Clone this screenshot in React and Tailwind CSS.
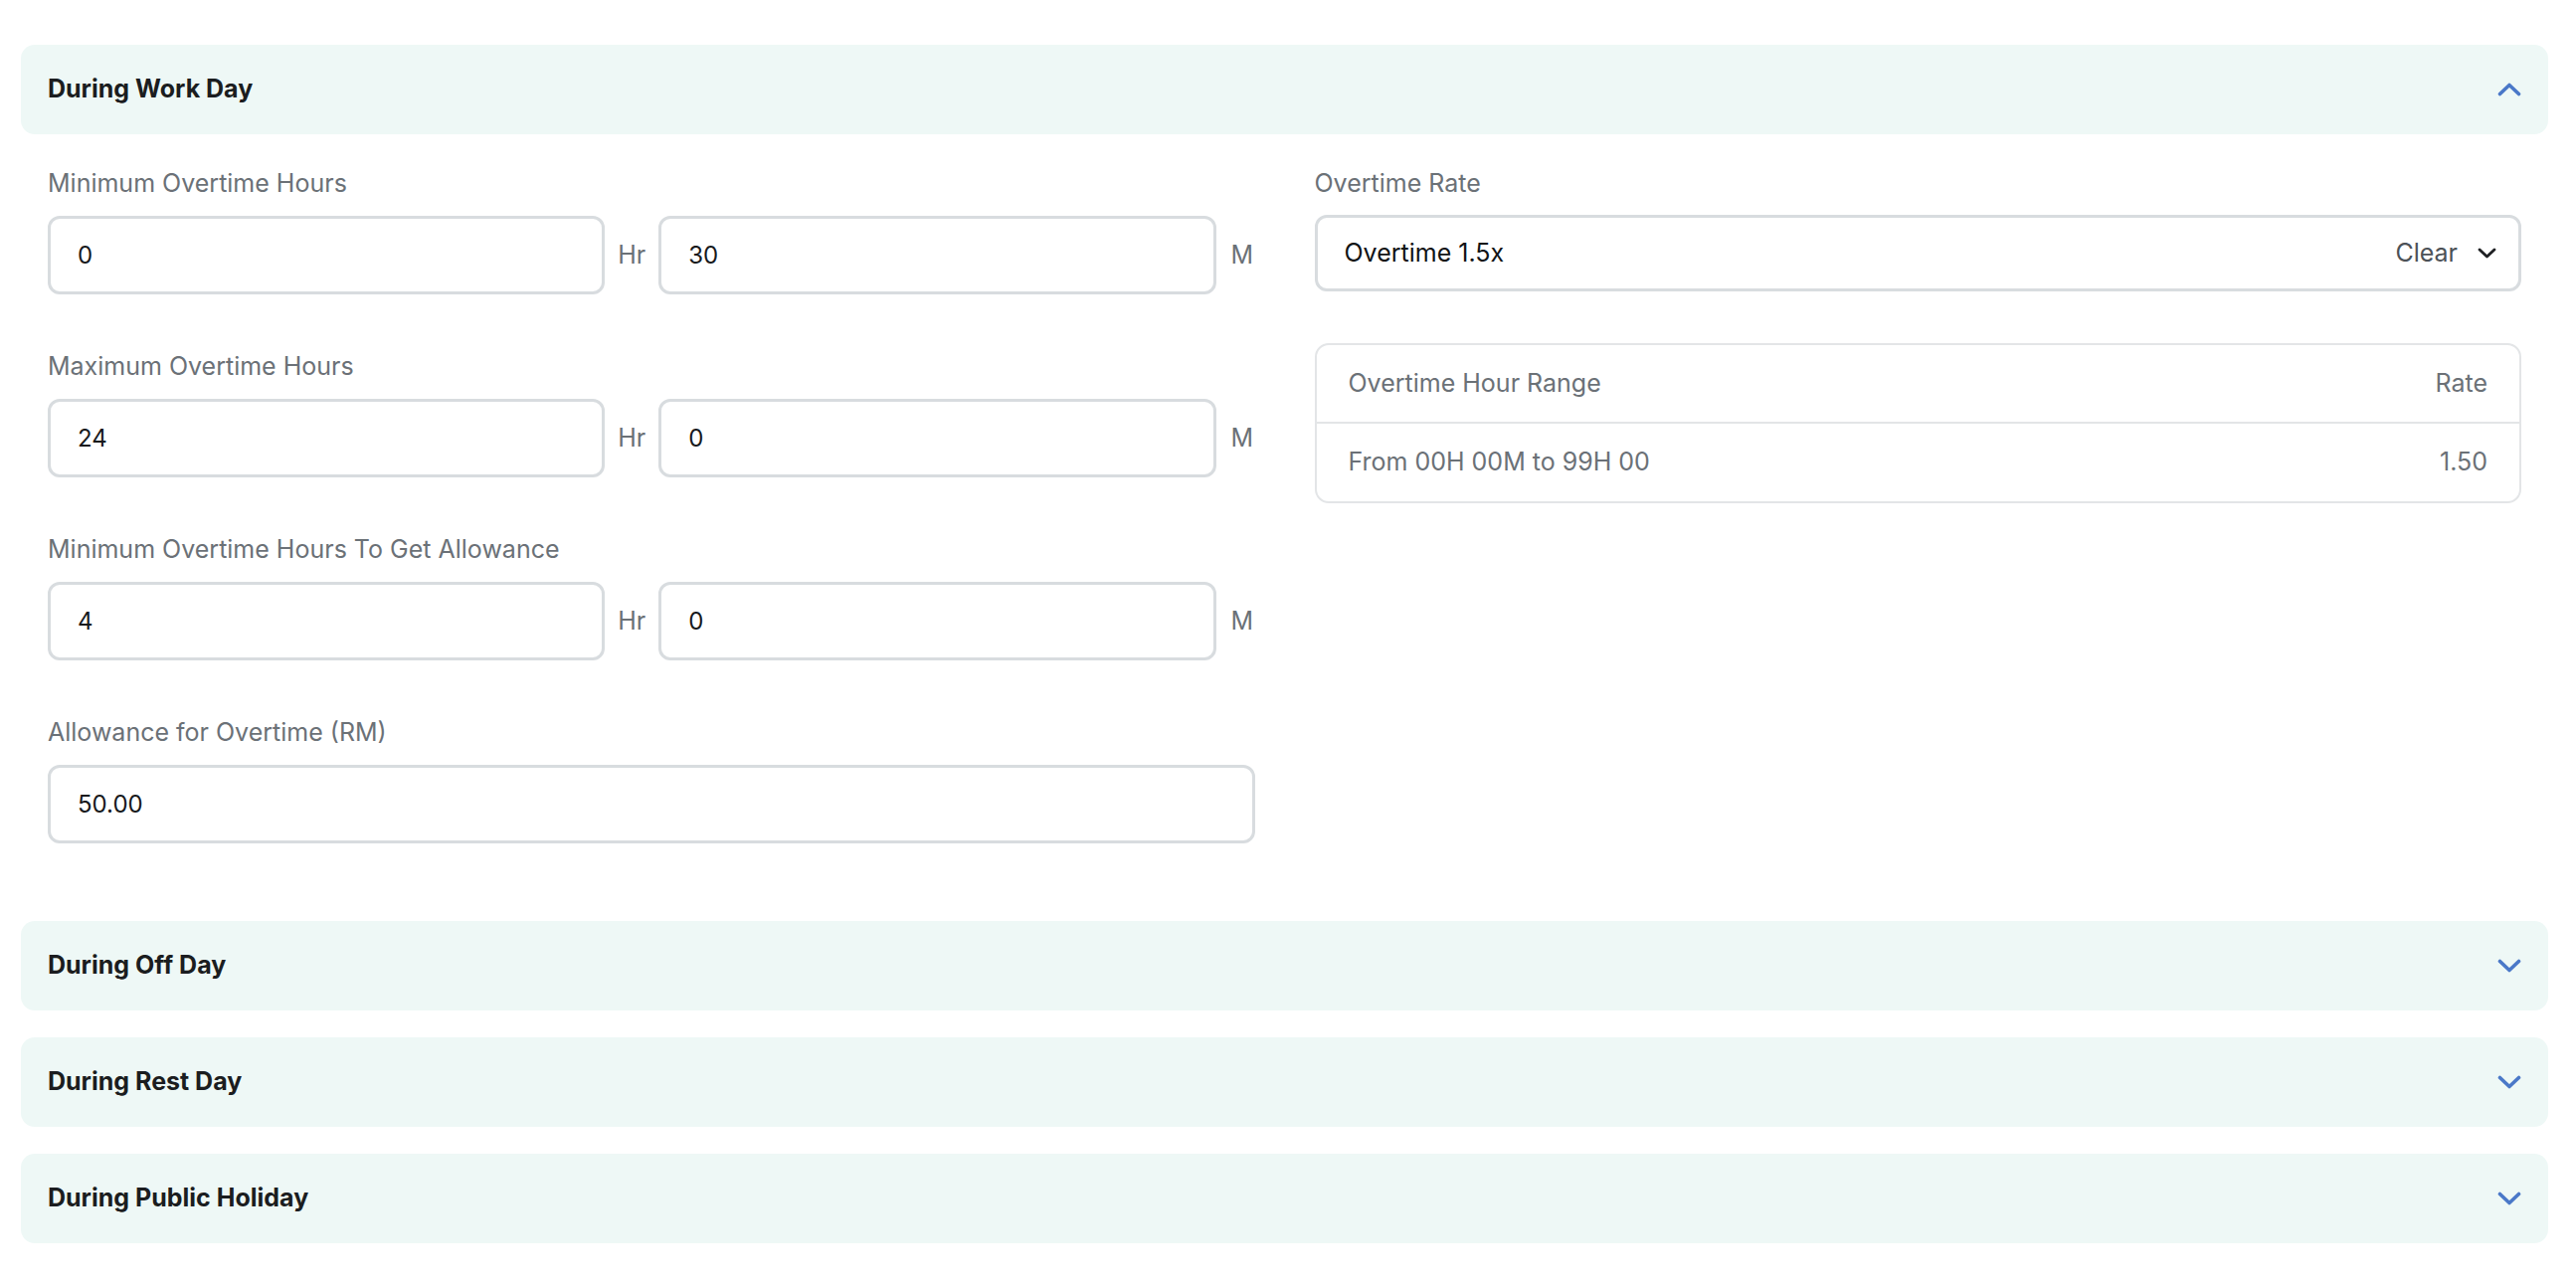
import React from "react";

const font = { fontFamily: "Inter, 'Noto Sans', sans-serif" };

const Chevron = ({ up = false, className = "" }) => (
  <svg
    viewBox="0 0 24 14"
    className={className}
    fill="none"
    stroke="currentColor"
    strokeWidth="3.6"
    strokeLinecap="round"
    strokeLinejoin="round"
  >
    {up ? <polyline points="2.5,11.5 12,2.5 21.5,11.5" /> : <polyline points="2.5,2.5 12,11.5 21.5,2.5" />}
  </svg>
);

const SectionHeader = ({ title, open }) => (
  <div className="flex h-[90px] items-center justify-between rounded-[14px] bg-[#eef8f6] px-[27px]">
    <span className="text-[25px] font-bold text-[#1b1d20]">{title}</span>
    <Chevron up={open} className="h-[14px] w-[24px] text-[#4a78c8]" />
  </div>
);

const Label = ({ children }) => (
  <div className="h-[32px] text-[25px] leading-[32px] text-[#6b7177]">{children}</div>
);

const TextBox = ({ value, className = "" }) => (
  <div
    className={`flex h-[79px] items-center rounded-[12px] border-[3px] border-[#d8dcdf] bg-white px-[27px] text-[24px] text-[#17191c] ${className}`}
  >
    {value}
  </div>
);

const HourMinute = ({ label, hours, minutes }) => (
  <div>
    <Label>{label}</Label>
    <div className="mt-[17px] flex items-center">
      <TextBox value={hours} className="flex-1" />
      <span className="mx-[13px] text-[25px] text-[#6b7177]">Hr</span>
      <TextBox value={minutes} className="flex-1" />
      <span className="ml-[15px] w-[24px] text-[25px] text-[#6b7177]">M</span>
    </div>
  </div>
);

const WorkDay = () => (
  <div className="grid grid-cols-2 gap-x-[60px] px-[27px] pt-[33px] pb-[51px]">
    <div className="flex flex-col gap-[56px]">
      <HourMinute label="Minimum Overtime Hours" hours="0" minutes="30" />
      <HourMinute label="Maximum Overtime Hours" hours="24" minutes="0" />
      <HourMinute label="Minimum Overtime Hours To Get Allowance" hours="4" minutes="0" />
      <div>
        <Label>Allowance for Overtime (RM)</Label>
        <TextBox value="50.00" className="mt-[17px]" />
      </div>
    </div>
    <div>
      <Label>Overtime Rate</Label>
      <div className="mt-[16px] flex h-[77px] items-center justify-between rounded-[12px] border-[3px] border-[#d8dcdf] bg-white pl-[27px] pr-[22px] text-[25px]">
        <span className="text-[#111315]">Overtime 1.5x</span>
        <div className="flex items-center gap-[20px]">
          <span className="text-[#4c5157]">Clear</span>
          <Chevron className="h-[11px] w-[19px] text-[#1f2124]" />
        </div>
      </div>
      <div className="mt-[52px] rounded-[14px] border-2 border-[#e3e5e7] text-[25px] text-[#6b7177]">
        <div className="flex h-[79px] items-center justify-between border-b-2 border-[#e3e5e7] px-[32px]">
          <span>Overtime Hour Range</span>
          <span>Rate</span>
        </div>
        <div className="flex h-[78px] items-center justify-between px-[32px]">
          <span>From 00H 00M to 99H 00</span>
          <span>1.50</span>
        </div>
      </div>
    </div>
  </div>
);

export default function App() {
  return (
    <div className="min-h-screen bg-white pt-[45px] pl-[21px] pr-[28px]" style={font}>
      <div className="flex flex-col gap-[27px]">
        <div>
          <SectionHeader title="During Work Day" open />
          <WorkDay />
        </div>
        <SectionHeader title="During Off Day" />
        <SectionHeader title="During Rest Day" />
        <SectionHeader title="During Public Holiday" />
      </div>
    </div>
  );
}
